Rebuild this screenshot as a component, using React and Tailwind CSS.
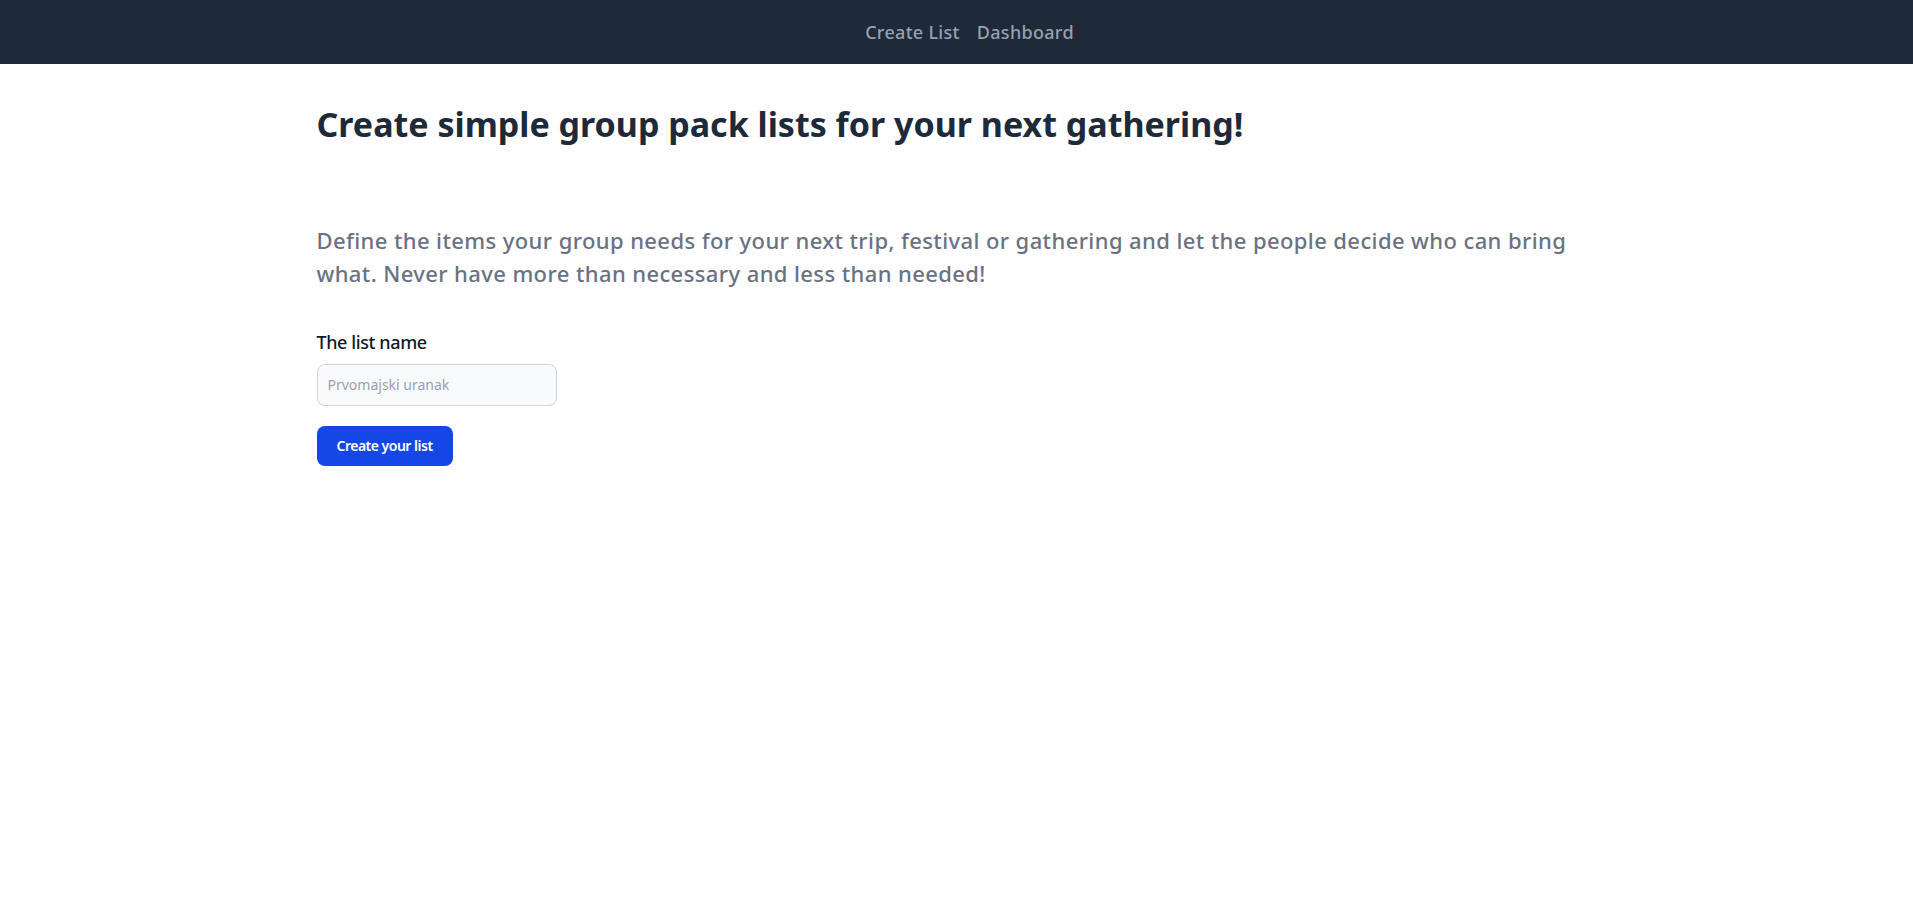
export default function App() {
  return (
    <div className="min-h-screen bg-white" style={{ fontFamily: '"Noto Sans", "Open Sans", sans-serif' }}>
      <nav className="h-16 bg-gray-800 flex items-center justify-center gap-[17px] pl-[26px]">
        <a className="text-lg text-gray-400 font-medium tracking-[0.3px]" href="#">Create List</a>
        <a className="text-lg text-gray-400 font-medium tracking-[0.3px]" href="#">Dashboard</a>
      </nav>
      <main className="mx-auto max-w-screen-xl">
        <h1 className="mt-10 text-[34px] leading-10 font-bold text-gray-800">
          Create simple group pack lists for your next gathering!
        </h1>
        <p className="mt-20 text-[22px] leading-[33px] tracking-[0.4px] text-gray-500 font-medium">
          Define the items your group needs for your next trip, festival or gathering and let the people decide who can bring what. Never have more than necessary and less than needed!
        </p>
        <div className="mt-[38px]">
          <label className="block text-lg font-medium tracking-[-0.4px] text-gray-900 mb-2">The list name</label>
          <input
            type="text"
            placeholder="Prvomajski uranak"
            className="block w-60 p-2.5 text-sm text-gray-900 bg-gray-50 border border-gray-300 rounded-lg placeholder:text-gray-400 outline-none"
          />
          <button className="mt-5 px-5 py-2.5 text-sm font-semibold tracking-[-0.5px] text-white bg-blue-700 rounded-lg">
            Create your list
          </button>
        </div>
      </main>
    </div>
  );
}
